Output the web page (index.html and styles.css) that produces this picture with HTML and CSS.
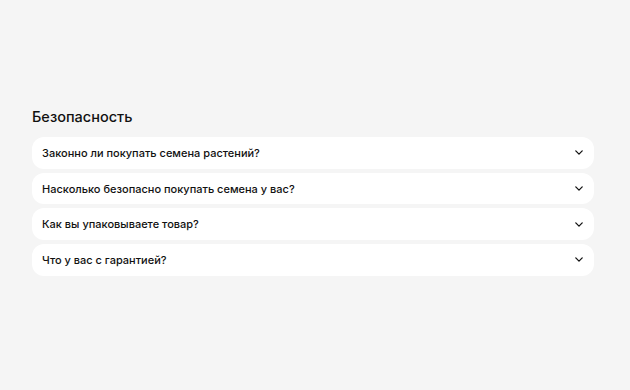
FILE: index.html
```html
<!DOCTYPE html>
<html>

<head>
  <meta charset="utf-8">
  <title>FAQ</title>
  <link rel="stylesheet" href="styles.css">
</head>

<body>
  <section class="faq">
    <h2 class="faqTitle">Безопасность</h2>
    <div class="faqList">
      <div class="faqItem">
        <span class="faqQuestion">Законно ли покупать семена растений?</span>
        <svg class="faqArrow" viewBox="0 0 10 6" width="8" height="5"><path d="M1 1l4 4 4-4" /></svg>
      </div>
      <div class="faqItem">
        <span class="faqQuestion">Насколько безопасно покупать семена у вас?</span>
        <svg class="faqArrow" viewBox="0 0 10 6" width="8" height="5"><path d="M1 1l4 4 4-4" /></svg>
      </div>
      <div class="faqItem">
        <span class="faqQuestion">Как вы упаковываете товар?</span>
        <svg class="faqArrow" viewBox="0 0 10 6" width="8" height="5"><path d="M1 1l4 4 4-4" /></svg>
      </div>
      <div class="faqItem">
        <span class="faqQuestion">Что у вас с гарантией?</span>
        <svg class="faqArrow" viewBox="0 0 10 6" width="8" height="5"><path d="M1 1l4 4 4-4" /></svg>
      </div>
    </div>
  </section>
</body>

</html>
```

FILE: styles.css
```css
html,
body {
  margin: 0;
  height: 100%;
}

body {
  background: #f5f5f5;
  font-family: Inter, "Noto Sans", Arial, sans-serif;
  color: #111;
}

.faq {
  padding: 108px 36px 0 32px;
}

.faqTitle {
  margin: 0 0 11px 0;
  font-size: 14.5px;
  font-weight: 500;
  line-height: 18px;
}

.faqList {
  display: flex;
  flex-direction: column;
  gap: 4px;
}

.faqItem {
  display: flex;
  align-items: center;
  justify-content: space-between;
  height: 31.7px;
  padding: 0 11px 0 10px;
  background: #fff;
  border-radius: 12px;
}

.faqQuestion {
  font-size: 11px;
  font-weight: 500;
}

.faqArrow {
  fill: none;
  stroke: #111;
  stroke-width: 1.6;
  stroke-linecap: round;
  stroke-linejoin: round;
}
```
